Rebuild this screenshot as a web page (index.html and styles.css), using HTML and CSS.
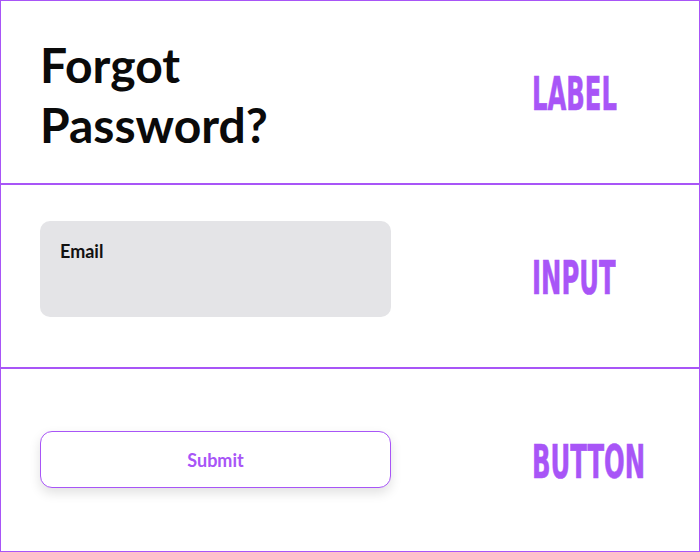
FILE: index.html
```html
<!DOCTYPE html>
<html lang="en">
<head>
<meta charset="utf-8">
<title>Forgot Password components</title>
<link rel="stylesheet" href="styles.css">
</head>
<body>
<main class="board">
  <section class="row">
    <div class="cell">
      <h1 class="title">Forgot<br>Password?</h1>
    </div>
    <div class="tag-cell"><span class="tag">LABEL</span></div>
  </section>
  <section class="row">
    <div class="cell">
      <div class="input">
        <span class="input-label">Email</span>
      </div>
    </div>
    <div class="tag-cell"><span class="tag">INPUT</span></div>
  </section>
  <section class="row">
    <div class="cell">
      <button class="submit" type="button">Submit</button>
    </div>
    <div class="tag-cell"><span class="tag">BUTTON</span></div>
  </section>
</main>
</body>
</html>
```
FILE: styles.css
```css
* { box-sizing: border-box; }

html, body {
  margin: 0;
  padding: 0;
  background: #ffffff;
}

body {
  font-family: "Lato", "Noto Sans", sans-serif;
  color: #0a0a0a;
}

.board {
  width: 700px;
  height: 552px;
  display: flex;
  flex-direction: column;
}

.row {
  height: 184px;
  border: 1px solid #a855f7;
  display: grid;
  grid-template-columns: 531px 1fr;
  align-items: center;
}

.cell {
  padding-left: 39px;
}

.title {
  margin: 6px 0 0 0;
  font-family: "Lato", sans-serif;
  font-weight: 700;
  font-size: 48px;
  line-height: 60px;
  color: #0a0a0a;
}

.input {
  width: 351px;
  height: 96px;
  margin-bottom: 14px;
  background: #e4e4e7;
  border-radius: 10px;
  padding: 20px;
}

.input-label {
  display: block;
  font-weight: 700;
  font-size: 18px;
  line-height: 21px;
  color: #111111;
}

.submit {
  display: block;
  width: 351px;
  height: 57px;
  margin-bottom: 2px;
  background: #ffffff;
  border: 1px solid #a855f7;
  border-radius: 12px;
  box-shadow: 0 5px 12px rgba(0, 0, 0, 0.12);
  font-family: "Lato", sans-serif;
  font-weight: 700;
  font-size: 18px;
  line-height: 22px;
  padding: 2px 0 0 0;
  color: #a855f7;
}

.tag-cell {
  display: flex;
  align-items: center;
}

.tag {
  display: inline-block;
  font-family: "DejaVu Sans Condensed", "DejaVu Sans", sans-serif;
  font-weight: 700;
  font-stretch: condensed;
  font-size: 47px;
  line-height: 47px;
  color: #a855f7;
  -webkit-text-stroke: 0.6px #a855f7;
  transform: scaleX(0.575);
  transform-origin: left center;
  margin-top: 2px;
}
```
